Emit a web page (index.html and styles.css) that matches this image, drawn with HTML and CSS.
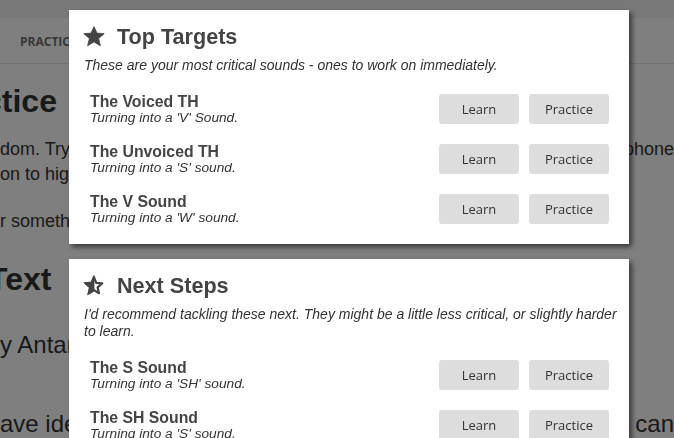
FILE: index.html
```html
<!DOCTYPE html>
<html lang="en">
<head>
<meta charset="utf-8">
<title>Practice</title>
<link rel="stylesheet" href="styles.css">
</head>
<body>
<div class="page">
  <div class="topstrip"></div>
  <nav class="nav"><span class="nav-item">Practice</span></nav>
  <main class="content">
    <h1 class="heading h-one">ctice</h1>
    <p class="line split"><span>dom. Try reading a passage aloud into your micro</span><span>phone</span></p>
    <p class="line">on to highlight the words</p>
    <p class="line gap-a">r something</p>
    <h2 class="heading h-two gap-b">Text</h2>
    <p class="line big gap-c">y Antarctica</p>
    <p class="line big split gap-d"><span>ave ideas about what you</span><span>can</span></p>
  </main>
</div>
<div class="overlay"></div>
<div class="modal">
  <section class="card">
    <header class="card-head">
      <svg class="star" viewBox="0 0 22 21" width="22" height="21" aria-hidden="true">
        <polygon points="11,0.5 13.9,7.1 21.2,7.7 15.6,12.5 17.4,19.8 11,15.9 4.6,19.8 6.4,12.5 0.8,7.7 8.1,7.1" fill="#444" stroke="#444" stroke-width="0.8" stroke-linejoin="round"/>
      </svg>
      <h2 class="card-title">Top Targets</h2>
    </header>
    <p class="card-desc">These are your most critical sounds - ones to work on immediately.</p>
    <ul class="sounds">
      <li class="sound">
        <div class="sound-text"><h3 class="sound-name">The Voiced TH</h3><p class="sound-sub">Turning into a 'V' Sound.</p></div>
        <div class="actions"><button class="btn">Learn</button><button class="btn">Practice</button></div>
      </li>
      <li class="sound">
        <div class="sound-text"><h3 class="sound-name">The Unvoiced TH</h3><p class="sound-sub">Turning into a 'S' sound.</p></div>
        <div class="actions"><button class="btn">Learn</button><button class="btn">Practice</button></div>
      </li>
      <li class="sound">
        <div class="sound-text"><h3 class="sound-name">The V Sound</h3><p class="sound-sub">Turning into a 'W' sound.</p></div>
        <div class="actions"><button class="btn">Learn</button><button class="btn">Practice</button></div>
      </li>
    </ul>
  </section>
  <section class="card">
    <header class="card-head">
      <svg class="star" viewBox="0 0 22 21" width="22" height="21" aria-hidden="true">
        <polygon points="11,2.2 13.2,7.9 19.2,8.4 14.6,12.3 16,18.2 11,15.1 6,18.2 7.4,12.3 2.8,8.4 8.8,7.9" fill="none" stroke="#444" stroke-width="2.2" stroke-linejoin="round"/>
        <polygon points="11,0.5 8.1,7.1 0.8,7.7 6.4,12.5 4.6,19.8 11,15.9" fill="#444" stroke="#444" stroke-width="0.8" stroke-linejoin="round"/>
      </svg>
      <h2 class="card-title">Next Steps</h2>
    </header>
    <p class="card-desc">I'd recommend tackling these next. They might be a little less critical, or slightly harder to learn.</p>
    <ul class="sounds">
      <li class="sound">
        <div class="sound-text"><h3 class="sound-name">The S Sound</h3><p class="sound-sub">Turning into a 'SH' sound.</p></div>
        <div class="actions"><button class="btn">Learn</button><button class="btn">Practice</button></div>
      </li>
      <li class="sound">
        <div class="sound-text"><h3 class="sound-name">The SH Sound</h3><p class="sound-sub">Turning into a 'S' sound.</p></div>
        <div class="actions"><button class="btn">Learn</button><button class="btn">Practice</button></div>
      </li>
    </ul>
  </section>
</div>
</body>
</html>
```

FILE: styles.css
```css
html, body {
  margin: 0;
  padding: 0;
  height: 100%;
  overflow: hidden;
}
body {
  background: #fff;
  font-family: "Liberation Sans", Arial, sans-serif;
  color: #333;
}
.page {
  width: 100%;
}
.topstrip {
  height: 18px;
  background: #f0f0f0;
}
.nav {
  height: 44px;
  border-top: 1px solid #fcfcfc;
  border-bottom: 1px solid #e6e6e6;
  display: flex;
  align-items: center;
  padding-left: 20px;
}
.nav-item {
  font-family: "Open Sans", sans-serif;
  font-weight: 700;
  font-size: 12px;
  text-transform: uppercase;
  color: #707070;
}
.content {
  white-space: nowrap;
}
.heading {
  margin: 18px 0 0;
  font-size: 32px;
  line-height: 38px;
  font-weight: 700;
  color: #333;
}
.h-one { text-indent: -16px; }
.h-two { text-indent: -12px; }
.line {
  margin: 0;
  font-size: 18px;
  line-height: 25px;
  color: #333;
}
.heading + .line {
  margin-top: 17px;
}
.split {
  display: flex;
  justify-content: space-between;
}
.gap-a { margin-top: 22px; }
.heading.gap-b { margin-top: 26px; }
.big {
  font-size: 24px;
  line-height: 34px;
}
.line.gap-c { margin-top: 30px; }
.gap-d { margin-top: 45px; }

.overlay {
  position: fixed;
  inset: 0;
  background: rgba(0, 0, 0, 0.5);
}
.modal {
  position: fixed;
  top: 10px;
  left: 69px;
  width: 560px;
  display: flex;
  flex-direction: column;
  gap: 15px;
}
.card {
  background: #fff;
  padding: 15px 0 20px 14px;
  box-shadow: 3px 3px 5px rgba(0, 0, 0, 0.55);
}
.card-head {
  display: flex;
  align-items: center;
  gap: 12px;
  height: 24px;
}
.star {
  display: block;
  flex: none;
  margin-top: -2px;
}
.card-title {
  margin: 0;
  font-size: 21.6px;
  line-height: 24px;
  font-weight: 700;
  color: #444;
}
.card-desc {
  margin: 8px 0 0 1px;
  font-size: 14px;
  line-height: 17px;
  font-style: italic;
  color: #333;
}
.sounds {
  list-style: none;
  margin: 20px 0 0;
  padding: 0 20px 0 7px;
  display: flex;
  flex-direction: column;
  gap: 20px;
}
.sound {
  display: flex;
  align-items: center;
  justify-content: space-between;
  height: 30px;
}
.sound-text {
  padding-top: 1px;
}
.sound-name {
  margin: 0;
  font-size: 15.8px;
  line-height: 16px;
  font-weight: 700;
  color: #444;
}
.sound-sub {
  margin: 0;
  font-size: 13.7px;
  line-height: 16px;
  font-style: italic;
  color: #333;
}
.actions {
  display: flex;
  gap: 10px;
}
.btn {
  width: 80px;
  height: 30px;
  border: 0;
  border-radius: 3px;
  background: #ddd;
  font-family: "Open Sans", sans-serif;
  font-size: 13px;
  color: #333;
  padding: 0;
}
```
